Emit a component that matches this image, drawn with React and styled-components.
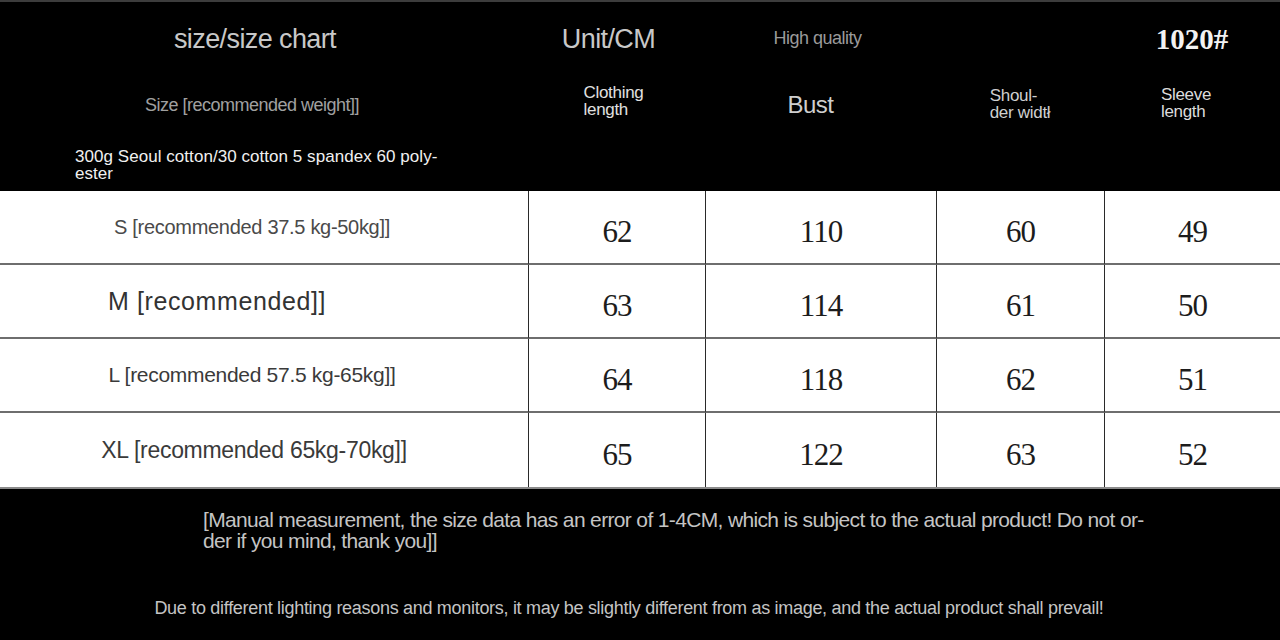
import React from 'react'
import styled, { createGlobalStyle } from 'styled-components'

const GlobalStyle = createGlobalStyle`
	html, body {
		margin: 0;
		padding: 0;
		background: #000;
	}
	body {
		font-family: "Liberation Sans", Arial, sans-serif;
	}
`

const cols = '528px 177px 231px 168px 176px'

const Page = styled.div`
	width: 1280px;
	height: 640px;
	background: #000;
	border-top: 2px solid #3c3c3c;
	box-sizing: border-box;
	display: flex;
	flex-direction: column;
	overflow: hidden;
`

const Header = styled.div`
	height: 189px;
	display: grid;
	grid-template-columns: ${cols};
	grid-template-rows: 72px 62px 55px;
	color: #c8c8c8;
`

const HeadCell = styled.div`
	display: flex;
	align-items: center;
	justify-content: ${p => (p.$left ? 'flex-start' : 'center')};
	font-size: ${p => p.$size || 16}px;
	color: ${p => p.$color || '#c8c8c8'};
	letter-spacing: ${p => p.$spacing || 0}px;
	grid-column: ${p => p.$span || 'auto'};
	padding-left: ${p => p.$pad || 0}px;
	padding-bottom: ${p => p.$down || 0}px;
	padding-top: ${p => p.$up || 0}px;
	box-sizing: border-box;

	& > * {
		transform: translateX(${p => p.$shift || 0}px);
	}
`

const Text = styled.span``

const Stack = styled.div`
	text-align: left;
	font-size: 17px;
	line-height: 17px;
	letter-spacing: ${p => (p.$spacing !== undefined ? p.$spacing : -0.3)}px;
`

const Serial = styled.span`
	font-family: "Liberation Serif", "Times New Roman", serif;
	font-weight: bold;
	font-size: 29px;
	color: #f2f2f2;
`

const Table = styled.div`
	background: #fff;
	display: grid;
	grid-template-columns: ${cols};
	border-bottom: 2px solid #8a8a8a;
`

const Cell = styled.div`
	height: ${p => p.$h}px;
	display: flex;
	align-items: center;
	justify-content: center;
	box-sizing: border-box;
	border-left: ${p => (p.$first ? 'none' : '1px solid #2a2a2a')};
	border-bottom: ${p => (p.$last ? 'none' : '2px solid #6e6e6e')};
`

const SizeLabel = styled.span`
	font-size: ${p => p.$size}px;
	color: ${p => p.$color};
	letter-spacing: ${p => p.$spacing}px;
	transform: translateX(${p => p.$shift}px);
`

const Num = styled.span`
	font-family: "Liberation Serif", "Times New Roman", serif;
	font-size: 31px;
	color: #1c1c1c;
	letter-spacing: -1px;
	padding-top: 9px;
`

const Footer = styled.div`
	flex: 1;
	display: flex;
	flex-direction: column;
	color: #c4c4c4;
`

const Note = styled.div`
	padding: 20px 0 0 203px;
	font-size: 21px;
	line-height: 21px;
	letter-spacing: -0.65px;
	width: 1000px;
`

const Prevail = styled.div`
	margin-top: 47px;
	text-align: center;
	font-size: 18px;
	letter-spacing: -0.3px;
	padding-right: 22px;
`

const rows = [
	{ label: 'S [recommended 37.5 kg-50kg]]', size: 20, spacing: -0.3, shift: -12, color: '#4a4a4a', vals: [62, 110, 60, 49] },
	{ label: 'M [recommended]]', size: 25, spacing: 0.6, shift: -47, color: '#333', vals: [63, 114, 61, 50] },
	{ label: 'L [recommended 57.5 kg-65kg]]', size: 21, spacing: -0.3, shift: -12, color: '#3a3a3a', vals: [64, 118, 62, 51] },
	{ label: 'XL [recommended 65kg-70kg]]', size: 23, spacing: -0.3, shift: -10, color: '#3a3a3a', vals: [65, 122, 63, 52] },
]

export default function App() {
	return (
		<Page>
			<GlobalStyle />
			<Header>
				<HeadCell $size={27} $spacing={-0.6} $up={3} $shift={-9}><Text>size/size chart</Text></HeadCell>
				<HeadCell $size={27} $spacing={-0.6} $up={2} $shift={-8}><Text>Unit/CM</Text></HeadCell>
				<HeadCell $size={18} $color="#9a9a9a" $spacing={-0.5} $shift={-3}><Text>High quality</Text></HeadCell>
				<HeadCell />
				<HeadCell $up={2}><Serial>1020#</Serial></HeadCell>

				<HeadCell $size={18} $color="#a0a0a0" $spacing={-0.5} $shift={-12}><Text>Size [recommended weight]]</Text></HeadCell>
				<HeadCell $color="#e0e0e0" $down={8} $shift={-3}><Stack>Clothing<br />length</Stack></HeadCell>
				<HeadCell $size={24} $color="#cfcfcf" $spacing={-0.5} $shift={-10}><Text>Bust</Text></HeadCell>
				<HeadCell $color="#cfcfcf" $down={2}><Stack>Shoul-<br />der widtł</Stack></HeadCell>
				<HeadCell $color="#dcdcdc" $down={4} $shift={-6}><Stack>Sleeve<br />length</Stack></HeadCell>

				<HeadCell $span="1 / 2" $left $pad={75} $color="#f0f0f0" $up={2}>
					<Stack $spacing={0.05}>300g Seoul cotton/30 cotton 5 spandex 60 poly-<br />ester</Stack>
				</HeadCell>
			</Header>
			<Table>
				{rows.map((r, i) => (
					<React.Fragment key={r.label}>
						<Cell $first $h={74} $last={i === rows.length - 1}>
							<SizeLabel $size={r.size} $color={r.color} $spacing={r.spacing} $shift={r.shift}>{r.label}</SizeLabel>
						</Cell>
						{r.vals.map((v, j) => (
							<Cell key={j} $h={74} $last={i === rows.length - 1}>
								<Num>{v}</Num>
							</Cell>
						))}
					</React.Fragment>
				))}
			</Table>
			<Footer>
				<Note>
					[Manual measurement, the size data has an error of 1-4CM, which is subject to the actual product! Do not or-<br />
					der if you mind, thank you]]
				</Note>
				<Prevail>
					Due to different lighting reasons and monitors, it may be slightly different from as image, and the actual product shall prevail!
				</Prevail>
			</Footer>
		</Page>
	)
}
